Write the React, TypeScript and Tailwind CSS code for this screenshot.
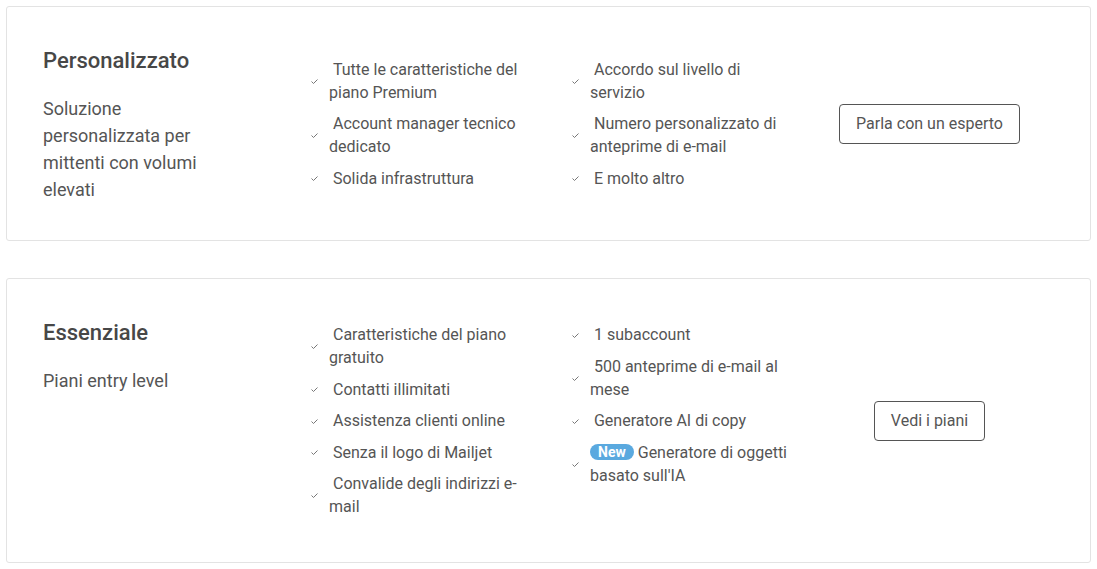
import type { ReactNode } from 'react'

interface Plan {
  title: string
  description: string
  left: ReactNode[]
  right: ReactNode[]
  cta: string
}

const plans: Plan[] = [
  {
    title: 'Personalizzato',
    description: 'Soluzione personalizzata per mittenti con volumi elevati',
    left: [
      'Tutte le caratteristiche del piano Premium',
      'Account manager tecnico dedicato',
      'Solida infrastruttura',
    ],
    right: [
      'Accordo sul livello di servizio',
      'Numero personalizzato di anteprime di e-mail',
      'E molto altro',
    ],
    cta: 'Parla con un esperto',
  },
  {
    title: 'Essenziale',
    description: 'Piani entry level',
    left: [
      'Caratteristiche del piano gratuito',
      'Contatti illimitati',
      'Assistenza clienti online',
      'Senza il logo di Mailjet',
      'Convalide degli indirizzi e-mail',
    ],
    right: [
      '1 subaccount',
      '500 anteprime di e-mail al mese',
      'Generatore AI di copy',
      <>
        <span className="mr-[4px] inline-block rounded-full bg-[#5aa9df] px-[8px] align-[1px] text-[14px] leading-[16px] font-bold text-white">
          New
        </span>
        Generatore di oggetti basato sull'IA
      </>,
    ],
    cta: 'Vedi i piani',
  },
]

function Check() {
  return (
    <svg width="12" height="8" viewBox="0 0 12 8" className="mr-[7px] shrink-0">
      <polyline points="1.5,4.5 3.5,6.5 7.5,2.5" fill="none" stroke="#777" strokeWidth="1" />
    </svg>
  )
}

function FeatureList({ items, width }: { items: ReactNode[]; width: string }) {
  return (
    <ul className={`flex shrink-0 flex-col gap-[8.5px] ${width}`}>
      {items.map((item, i) => (
        <li key={i} className="flex items-center">
          <Check />
          <span className="w-[200px] text-[16px] leading-[23px] text-[#555]">
            {typeof item === 'string' ? '\u00a0' + item : item}
          </span>
        </li>
      ))}
    </ul>
  )
}

function PlanCard({ plan }: { plan: Plan }) {
  return (
    <div className="mx-[6px] flex rounded-[3px] border border-[#e3e3e3] bg-white pt-[37px] pr-[42px] pb-[37px] pl-[36px]">
      <div className="mt-[2px] w-[267px] shrink-0 self-start">
        <h2 className="text-[22px] leading-[30px] font-medium text-[#474747]">{plan.title}</h2>
        <p className="mt-[19px] w-[180px] text-[18px] leading-[27px] text-[#555]">{plan.description}</p>
      </div>
      <div className="my-[7px] flex items-start self-center">
        <FeatureList items={plan.left} width="w-[261px]" />
        <FeatureList items={plan.right} width="w-[240px]" />
      </div>
      <div className="flex flex-1 items-center justify-center">
        <button
          type="button"
          className="h-10 rounded-[4px] border border-[#555] bg-white px-4 text-[16px] text-[#555]"
        >
          {plan.cta}
        </button>
      </div>
    </div>
  )
}

export default function App() {
  return (
    <div className="min-h-screen bg-white pt-[6px] font-['Roboto',sans-serif]">
      <div className="flex flex-col gap-[37px]">
        {plans.map((p) => (
          <PlanCard key={p.title} plan={p} />
        ))}
      </div>
    </div>
  )
}
